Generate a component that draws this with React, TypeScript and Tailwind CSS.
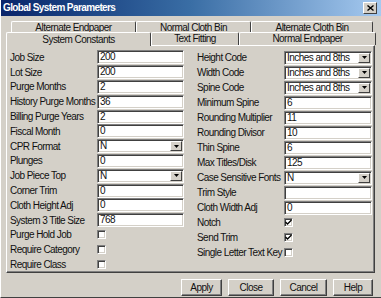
import React from "react";

type Field =
  | { label: string; kind: "text"; value: string }
  | { label: string; kind: "select"; value: string }
  | { label: string; kind: "check"; checked: boolean };

const LEFT: Field[] = [
  { label: "Job Size", kind: "text", value: "200" },
  { label: "Lot Size", kind: "text", value: "200" },
  { label: "Purge Months", kind: "text", value: "2" },
  { label: "History Purge Months", kind: "text", value: "36" },
  { label: "Billing Purge Years", kind: "text", value: "2" },
  { label: "Fiscal Month", kind: "text", value: "0" },
  { label: "CPR Format", kind: "select", value: "N" },
  { label: "Plunges", kind: "text", value: "0" },
  { label: "Job Piece Top", kind: "select", value: "N" },
  { label: "Corner Trim", kind: "text", value: "0" },
  { label: "Cloth Height Adj", kind: "text", value: "0" },
  { label: "System 3 Title Size", kind: "text", value: "768" },
  { label: "Purge Hold Job", kind: "check", checked: false },
  { label: "Require Category", kind: "check", checked: false },
  { label: "Require Class", kind: "check", checked: false },
];

const RIGHT: Field[] = [
  { label: "Height Code", kind: "select", value: "Inches and 8ths" },
  { label: "Width Code", kind: "select", value: "Inches and 8ths" },
  { label: "Spine Code", kind: "select", value: "Inches and 8ths" },
  { label: "Minimum Spine", kind: "text", value: "6" },
  { label: "Rounding Multiplier", kind: "text", value: "11" },
  { label: "Rounding Divisor", kind: "text", value: "10" },
  { label: "Thin Spine", kind: "text", value: "6" },
  { label: "Max Titles/Disk", kind: "text", value: "125" },
  { label: "Case Sensitive Fonts", kind: "select", value: "N" },
  { label: "Trim Style", kind: "text", value: "" },
  { label: "Cloth Width Adj", kind: "text", value: "0" },
  { label: "Notch", kind: "check", checked: true },
  { label: "Send Trim", kind: "check", checked: true },
  { label: "Single Letter Text Key", kind: "check", checked: false },
];

const sunken =
  "border border-t-[#808080] border-l-[#808080] border-b-white border-r-white shadow-[inset_1px_1px_0_#404040,inset_-1px_-1px_0_#d4d0c8]";

function Row({ f, inputW }: { f: Field; inputW: string }) {
  return (
    <div className="flex items-center h-[15px]">
      <div className="w-[87px] shrink-0 whitespace-nowrap leading-[13px]">{f.label}</div>
      {f.kind === "check" ? (
        <div className={`w-[9px] h-[9px] bg-white ${sunken} flex items-center justify-center`}>
          {f.checked && (
            <svg width="7" height="7" viewBox="0 0 7 7">
              <path d="M0.5 3 L2.5 5 L6.5 1" stroke="#000" strokeWidth="1.3" fill="none" />
            </svg>
          )}
        </div>
      ) : (
        <div className={`${inputW} h-[14px] bg-white ${sunken} flex items-center pl-[2px] leading-[12px] relative`}>
          <span className="whitespace-nowrap">{f.value}</span>
          {f.kind === "select" && (
            <div className="absolute right-[1px] top-[1px] w-[12px] h-[10px] bg-[#d4d0c8] border border-t-white border-l-white border-b-[#404040] border-r-[#404040] flex items-center justify-center">
              <svg width="5" height="3" viewBox="0 0 5 3">
                <path d="M0 0 H5 L2.5 3 Z" fill="#000" />
              </svg>
            </div>
          )}
        </div>
      )}
    </div>
  );
}

function Tab({ label, w, active }: { label: string; w: string; active?: boolean }) {
  return (
    <div
      className={`${w} shrink-0 flex items-center justify-center border-t border-l border-t-white border-l-white border-r border-r-[#404040] rounded-t-[2px] ${
        active ? "bg-[#d4d0c8] h-[14px] -mb-[1px] z-10" : "bg-[#d4d0c8] h-[13px]"
      }`}
    >
      <span className="leading-[12px] whitespace-nowrap">{label}</span>
    </div>
  );
}

function Btn({ label, w }: { label: string; w: string }) {
  return (
    <div
      className={`${w} h-[17px] flex items-center justify-center border border-t-white border-l-white border-b-[#404040] border-r-[#404040] shadow-[inset_-1px_-1px_0_#808080]`}
    >
      {label}
    </div>
  );
}

export default function App() {
  return (
    <div
      className="w-[381px] h-[298px] bg-[#d4d0c8] text-[10px] tracking-[-0.55px] text-[#111] flex flex-col overflow-hidden border-b border-b-[#404040] border-l border-l-white"
      style={{ fontFamily: '"Liberation Sans", Arial, sans-serif' }}
    >
      {/* title bar */}
      <div className="h-[16px] shrink-0 bg-gradient-to-r from-[#0a246a] via-[#3a6ea5] to-[#a6caf0] flex items-center px-[2px]">
        <span className="text-white font-bold text-[10px] tracking-[-0.6px] leading-[14px]">Global System Parameters</span>
        <div className="ml-auto mr-[2px] w-[14px] h-[12px] bg-[#d4d0c8] border border-t-white border-l-white border-b-[#404040] border-r-[#404040] flex items-center justify-center">
          <svg width="7" height="6" viewBox="0 0 7 6">
            <path d="M0.5 0.5 L6.5 5.5 M6.5 0.5 L0.5 5.5" stroke="#000" strokeWidth="1.4" />
          </svg>
        </div>
      </div>

      {/* tabs */}
      <div className="mt-[5px] flex pl-[10px] h-[11px] overflow-visible">
        <Tab label="Alternate Endpaper" w="w-[125px]" />
        <Tab label="Normal Cloth Bin" w="w-[115px]" />
        <Tab label="Alternate Cloth Bin" w="w-[122px]" />
      </div>
      <div className="flex pl-[5px] items-end relative z-10">
        <Tab label="System Constants" w="w-[145px]" active />
        <Tab label="Text Fitting" w="w-[88px]" />
        <Tab label="Normal Endpaper" w="w-[137px]" />
      </div>

      {/* panel */}
      <div className="mx-[5px] mr-[6px] h-[228px] border border-t-white border-l-white border-b-[#404040] border-r-[#404040] shadow-[inset_-1px_-1px_0_#808080] flex pt-[4px]">
        <div className="w-[187px] pl-[3px] flex flex-col gap-0">
          {LEFT.map((f) => (
            <Row key={f.label} f={f} inputW="w-[87px]" />
          ))}
        </div>
        <div className="pl-[3px] flex flex-col">
          {RIGHT.map((f) => (
            <Row key={f.label} f={f} inputW="w-[88px]" />
          ))}
        </div>
      </div>

      {/* buttons */}
      <div className="mt-[6px] flex justify-end gap-[6px] pr-[8px]">
        <Btn label="Apply" w="w-[41px]" />
        <Btn label="Close" w="w-[46px]" />
        <Btn label="Cancel" w="w-[47px]" />
        <Btn label="Help" w="w-[40px]" />
      </div>
    </div>
  );
}
